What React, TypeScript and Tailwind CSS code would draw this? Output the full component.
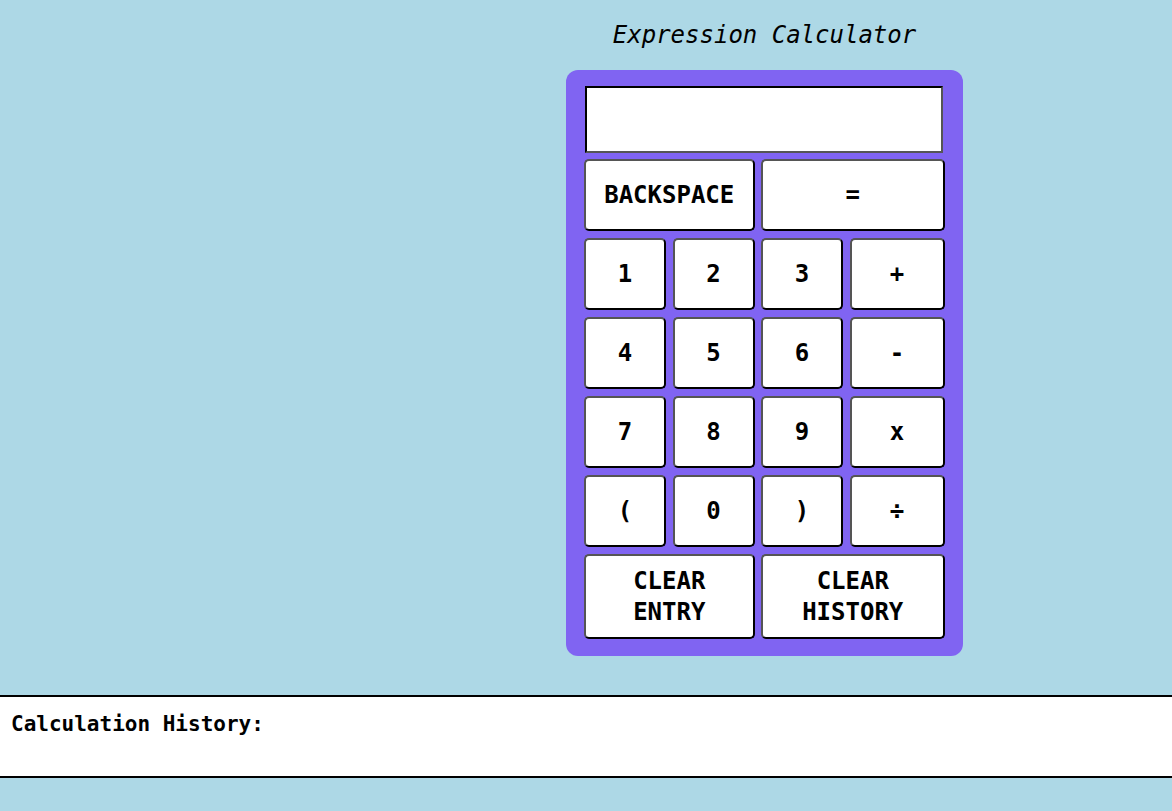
import React from "react";

const mono = "font-['DejaVu_Sans_Mono','Liberation_Mono',monospace]";

function Btn({ label, className = "" }: { label: React.ReactNode; className?: string }) {
  return (
    <button
      className={`bg-white text-black font-bold text-[24px] leading-[31px] rounded-[5px] border-2 border-[#555555] border-r-black border-b-black flex items-center justify-center ${mono} ${className}`}
    >
      {label}
    </button>
  );
}

export default function App() {
  const rows: string[][] = [
    ["1", "2", "3", "+"],
    ["4", "5", "6", "-"],
    ["7", "8", "9", "x"],
    ["(", "0", ")", "÷"],
  ];
  return (
    <div className={`min-h-[811px] bg-[#add8e6] ${mono} pt-[20px]`}>
      <div className="ml-[566px] w-[397px] flex flex-col items-center">
        <h1 className="text-[24px] leading-[30px] italic font-medium text-black">Expression Calculator</h1>
        <div className="mt-[20px] w-[397px] bg-[#8064f2] rounded-[12px] pl-[18px] pr-[18px] pt-[16px] pb-[17px]">
          <div className="ml-[1px] w-[358px] h-[67px] bg-white border-2 border-black border-r-[#555555] border-b-[#555555]" />
          <div className="mt-[6px] grid grid-cols-[82px_82px_82px_95px] grid-rows-[72px_72px_72px_72px_72px_85px] gap-x-[6.5px] gap-y-[7px]">
            <Btn label="BACKSPACE" className="col-span-2" />
            <Btn label="=" className="col-span-2" />
            {rows.flat().map((k, i) => (
              <Btn key={i} label={k} />
            ))}
            <Btn label={<span>CLEAR<br />ENTRY</span>} className="col-span-2" />
            <Btn label={<span>CLEAR<br />HISTORY</span>} className="col-span-2" />
          </div>
        </div>
      </div>
      <div className="mt-[39px] bg-white border-y-2 border-black h-[83px] px-[11px] pt-[15px]">
        <p className="text-[21px] leading-[24px] font-bold text-black">Calculation History:</p>
      </div>
    </div>
  );
}
